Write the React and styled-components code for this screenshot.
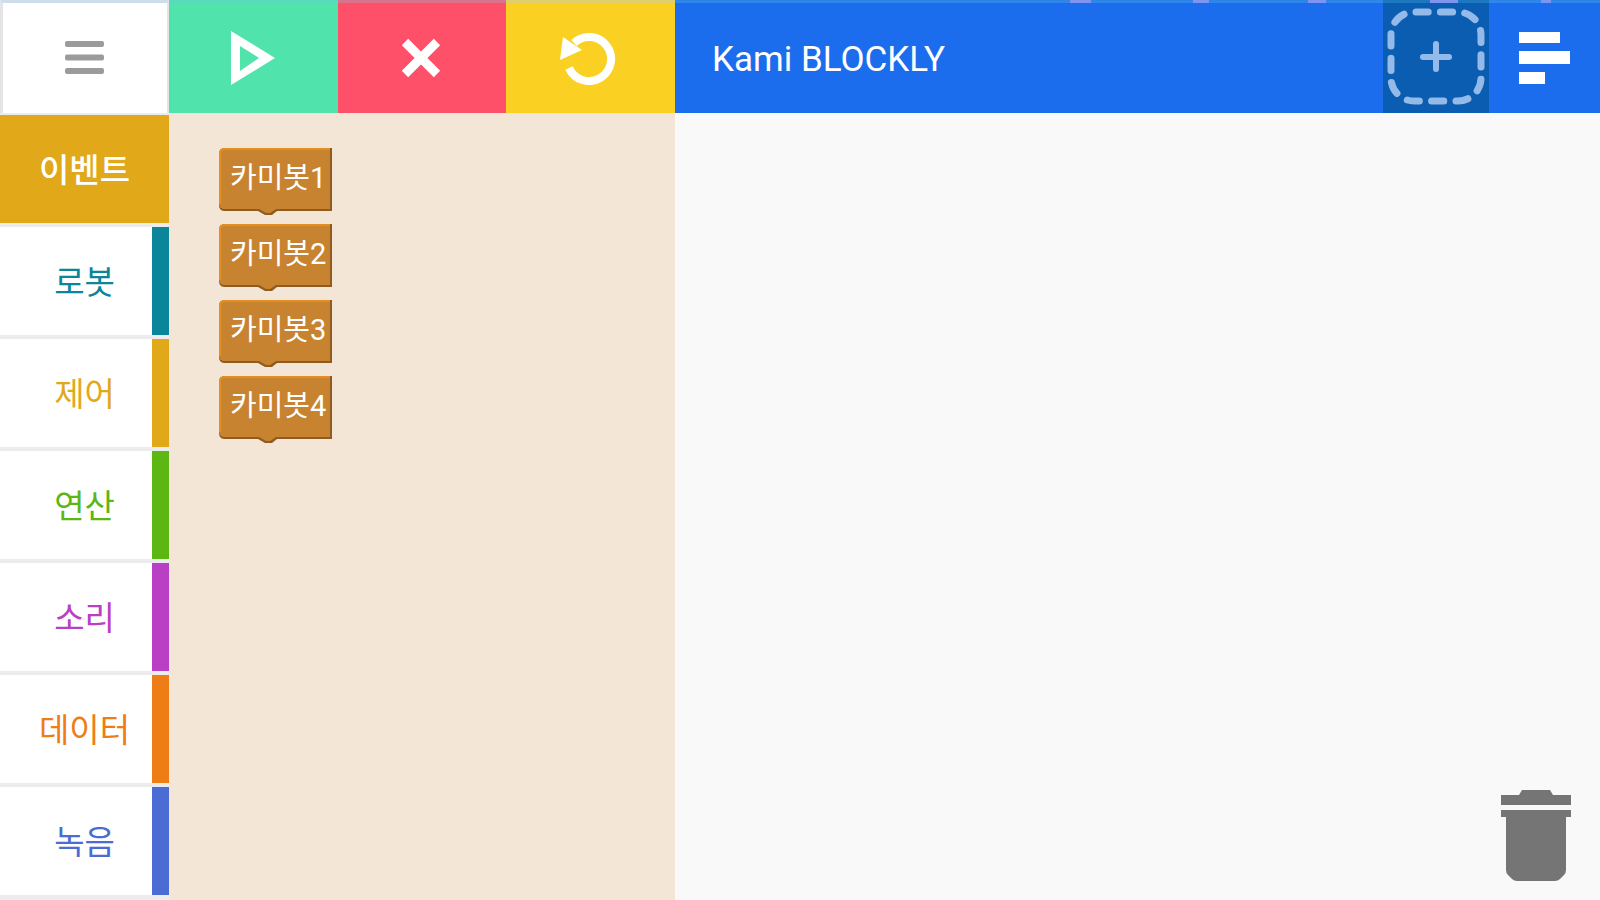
import React, { useState } from 'react';
import styled, { createGlobalStyle } from 'styled-components';

const GlobalStyle = createGlobalStyle`
  * {
    box-sizing: border-box;
  }

  body {
    margin: 0;
    font-family: Roboto, 'Noto Sans CJK KR', sans-serif;
  }

  button {
    margin: 0;
    padding: 0;
    border: 0;
    font: inherit;
    cursor: pointer;
  }
`;

const CATEGORIES = [
  { name: '이벤트', color: '#e1a91a' },
  { name: '로봇', color: '#0b8599' },
  { name: '제어', color: '#e1a91a' },
  { name: '연산', color: '#5cb712' },
  { name: '소리', color: '#b93fc4' },
  { name: '데이터', color: '#ee7d16' },
  { name: '녹음', color: '#4a6cd4' },
];

const BLOCKS = ['카미봇1', '카미봇2', '카미봇3', '카미봇4'];

const Page = styled.div`
  display: grid;
  grid-template-columns: 169px 506px 1fr;
  grid-template-rows: 113px 1fr;
  min-height: 100vh;
`;

const ToolButton = styled.button`
  display: flex;
  align-items: center;
  justify-content: center;
  background: ${({ $color }) => $color};
  border-top: 3px solid ${({ $edge }) => $edge};
`;

const MenuButton = styled(ToolButton)`
  border-left: 3px solid #e4e4e6;
  border-right: 2px solid #e4e4e6;
`;

const Tools = styled.div`
  display: grid;
  grid-template-columns: repeat(3, 1fr);
`;

const Header = styled.header`
  position: relative;
  display: flex;
  align-items: stretch;
  padding-left: 37px;
  background: #1c6cee;
  border-top: 3px solid #2e86ea;
`;

const StatusMarks = styled.svg`
  position: absolute;
  top: -3px;
  right: 0;
`;

const Title = styled.h1`
  flex: 1;
  align-self: center;
  margin: 0;
  padding-top: 4px;
  color: #fff;
  font-size: 35px;
  font-weight: 400;
  line-height: 44px;
`;

const AddButton = styled.button`
  display: flex;
  width: 106px;
  background: #0b5db1;
`;

const ListButton = styled.button`
  display: flex;
  align-items: center;
  justify-content: center;
  width: 111px;
  background: transparent;
`;

const Sidebar = styled.nav`
  display: flex;
  flex-direction: column;
  gap: 4px;
  padding-top: 2px;
  background: #ececec;
`;

const Category = styled.button`
  height: 108px;
  padding-top: 4px;
  background: ${({ $active, $color }) =>
    $active
      ? $color
      : `linear-gradient(to left, ${$color} 17px, #fff 17px)`};
  color: ${({ $active, $color }) => ($active ? '#fff' : $color)};
  font-size: 33px;
  font-weight: ${({ $active }) => ($active ? 500 : 400)};
  line-height: 44px;
`;

const Palette = styled.section`
  display: flex;
  flex-direction: column;
  align-items: flex-start;
  gap: 9px;
  padding: 35px 50px;
  background: #f3e6d6;
`;

const BlockButton = styled.button`
  position: relative;
  width: 113px;
  height: 67px;
  padding: 0 0 8px 11px;
  background: transparent;
  color: #fff;
  font-size: 29px;
  line-height: 40px;
  text-align: left;
  white-space: nowrap;
`;

const BlockShape = styled.svg`
  position: absolute;
  top: 0;
  left: 0;
`;

const BlockLabel = styled.span`
  position: relative;
`;

const Workspace = styled.main`
  position: relative;
  background: #f9f9f9;
`;

const TrashButton = styled.button`
  position: absolute;
  right: 29px;
  bottom: 19px;
  display: flex;
  background: transparent;
`;

const MenuIcon = () => (
  <svg width="40" height="34" viewBox="0 0 40 34" fill="#9b9b9b">
    <rect width="39" height="6" rx="2" />
    <rect y="13.5" width="39" height="6" rx="2" />
    <rect y="27" width="39" height="6" rx="2" />
  </svg>
);

const PlayIcon = () => (
  <svg width="44" height="54" viewBox="0 0 44 54" fill="#fff">
    <path fillRule="evenodd" d="M0 0L44 27L0 54ZM9 15V40L28 27Z" />
  </svg>
);

const StopIcon = () => (
  <svg width="42" height="40" viewBox="0 0 42 40">
    <path d="M4 4L36 36M36 4L4 36" stroke="#fff" strokeWidth="9" />
  </svg>
);

const UndoIcon = () => (
  <svg width="62" height="54" viewBox="0 0 62 54">
    <path
      d="M14 12A22 22 0 1 1 9 37"
      fill="none"
      stroke="#fff"
      strokeWidth="8"
    />
    <path d="M3 6L22 19L0 29Z" fill="#fff" />
  </svg>
);

const AddIcon = () => (
  <svg width="106" height="110" viewBox="0 0 106 110" fill="none">
    <path
      d="M33 9H75A23 23 0 0 1 98 32V75A23 23 0 0 1 75 98H31A23 23 0 0 1 8 75V32A23 23 0 0 1 31 9Z"
      pathLength="312"
      stroke="#93bae8"
      strokeWidth="7"
      strokeLinecap="round"
      strokeDasharray="12 12"
    />
    <path
      d="M53 41V66M40 54H66"
      stroke="#93bae8"
      strokeWidth="6"
      strokeLinecap="round"
    />
  </svg>
);

const ListIcon = () => (
  <svg width="51" height="52" viewBox="0 0 51 52" fill="#fff">
    <rect width="41" height="11" />
    <rect y="19" width="51" height="13" />
    <rect y="40" width="26" height="12" />
  </svg>
);

const TrashIcon = () => (
  <svg width="70" height="91" viewBox="0 0 70 91" fill="#757575">
    <path d="M0 5H18L21 0H49L52 5H70V15H0Z" />
    <path d="M0 20H70V27H65V80Q65 83 63 85L59 89Q57 91 54 91H16Q13 91 11 89L7 85Q5 83 5 80V27H0Z" />
  </svg>
);

const Block = ({ label }) => (
  <BlockButton>
    <BlockShape width="113" height="68" viewBox="0 0 113 68" aria-hidden="true">
      <path
        d="M0 6Q0 0 6 0H113V63H58L53 67H46L39 63H6Q0 63 0 57Z"
        fill="#8f5b20"
      />
      <path
        d="M0 6Q0 0 6 0H111V61H57L51 65H47L40 61H6Q0 61 0 55Z"
        fill="#c88330"
      />
      <path
        d="M1 56V6Q1 1 6 1H111"
        fill="none"
        stroke="#e58f20"
        strokeWidth="2"
      />
    </BlockShape>
    <BlockLabel>{label}</BlockLabel>
  </BlockButton>
);

const App = () => {
  const [active, setActive] = useState('이벤트');

  return (
    <>
      <GlobalStyle />
      <Page>
        <MenuButton $color="#fff" $edge="#cddde9" aria-label="메뉴">
          <MenuIcon />
        </MenuButton>
        <Tools>
          <ToolButton $color="#50e3ac" $edge="#58dbbb" aria-label="실행">
            <PlayIcon />
          </ToolButton>
          <ToolButton $color="#ff5069" $edge="#d9748c" aria-label="정지">
            <StopIcon />
          </ToolButton>
          <ToolButton $color="#fad122" $edge="#dfd06c" aria-label="초기화">
            <UndoIcon />
          </ToolButton>
        </Tools>
        <Header>
          <Title>Kami BLOCKLY</Title>
          <AddButton aria-label="추가">
            <AddIcon />
          </AddButton>
          <ListButton aria-label="목록">
            <ListIcon />
          </ListButton>
          <StatusMarks width="530" height="3" aria-hidden="true">
            <rect x="313" width="106" height="3" fill="#1d78c0" />
            <g fill="#7f93f0">
              <rect width="21" height="3" />
              <rect x="123" width="16" height="3" />
              <rect x="238" width="18" height="3" />
              <rect x="360" width="28" height="3" />
              <rect x="471" width="10" height="3" />
            </g>
          </StatusMarks>
        </Header>
        <Sidebar>
          {CATEGORIES.map(({ name, color }) => (
            <Category
              key={name}
              $color={color}
              $active={name === active}
              onClick={() => setActive(name)}
            >
              {name}
            </Category>
          ))}
        </Sidebar>
        <Palette>
          {BLOCKS.map((label) => (
            <Block key={label} label={label} />
          ))}
        </Palette>
        <Workspace>
          <TrashButton aria-label="휴지통">
            <TrashIcon />
          </TrashButton>
        </Workspace>
      </Page>
    </>
  );
};

export default App;
